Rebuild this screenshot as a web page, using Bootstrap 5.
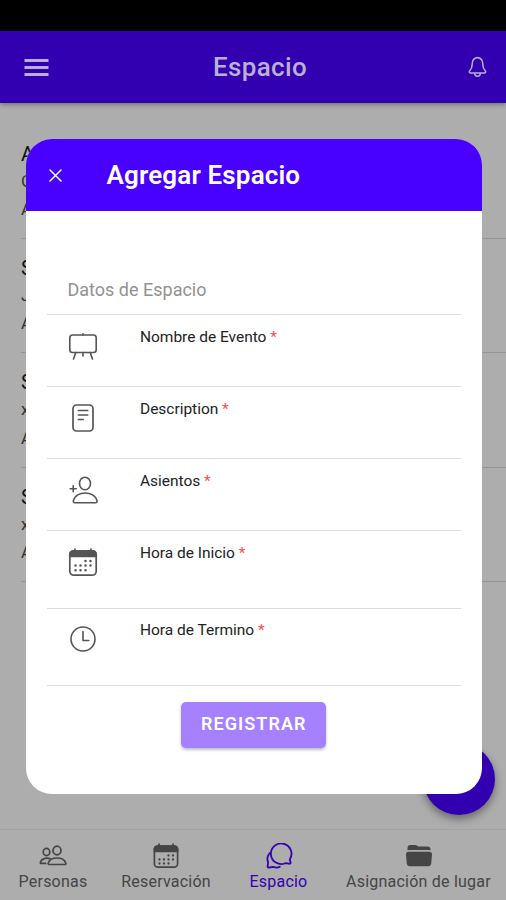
<!DOCTYPE html>
<html lang="es">
<head>
<meta charset="utf-8">
<meta name="viewport" content="width=device-width, initial-scale=1">
<title>Espacio</title>
<link href="https://cdn.jsdelivr.net/npm/bootstrap@5.3.0/dist/css/bootstrap.min.css" rel="stylesheet">
<style>
body{font-family:Roboto,"Liberation Sans",sans-serif;background:#adadad;height:900px;overflow:hidden}
svg{display:block;flex:none;fill:none;stroke:currentColor;stroke-linecap:round;stroke-linejoin:round}
.status{height:31px;background:#000}
.topbar{height:72px;background:#3200b0;color:#bab0d4;padding:0 18px 0 24px;box-shadow:0 2px 4px rgba(0,0,0,.3);z-index:1}
.topbar-title{font-size:26px;font-weight:500;line-height:30px;letter-spacing:.35px;padding-left:4px}
.menu-icon{stroke-linecap:butt}
.spaces{padding:21.5px 0 0 21px}
.space-item{height:114.4px;border-bottom:1px solid #949494;padding-top:16px;color:#333}
.space-item h2{font-size:20px;font-weight:400;line-height:26px;color:#111;margin:0}
.space-item p{font-size:17px;line-height:28.5px;margin:0}
.tabs{height:71px;border-top:1px solid #a2a2a2;background:#adadad;color:#454545}
.tab{padding-top:13px;font-size:16px;line-height:20px;letter-spacing:.22px;white-space:nowrap}
.tab svg{height:26px;margin-bottom:3px}
.tab-a{width:106px}.tab-b{width:120px}.tab-c{width:105px}.tab-d{width:175px}
.tab-current{color:#3400b2}
.fab{width:72px;height:72px;left:422.5px;top:743px;background:#3200b0;box-shadow:0 4px 9px rgba(0,0,0,.4)}
.sheet{left:26px;top:139px;width:455.5px;height:655px;border-radius:26px;background:#fff}
.sheet-head{height:72px;background:#4800ff;color:#fff;padding-left:22px}
.sheet-title{font-size:26px;font-weight:600;margin-left:43.5px;letter-spacing:.15px}
.sheet-body{padding:54px 20.5px 0}
.section-label{height:50px;padding-left:21px;padding-top:13px;font-size:18px;line-height:23px;color:#929292;border-bottom:1px solid #dcdcdc}
.field{height:72.1px;border-bottom:1px solid #dcdcdc;padding-left:20.5px;color:#555}
.field-tall{height:77.4px}
.field svg{margin-top:14.500px}
.field label{margin-left:41px;margin-top:11.500px;font-size:15.5px;line-height:20px;color:#222;letter-spacing:-.02px}
.field label span{color:#ff4a50}
.btn-register{width:145px;height:46px;margin-top:16px;background:#a580ff;color:#fff;border:0;border-radius:5px;font-size:18px;line-height:44px;font-weight:600;letter-spacing:1.05px;padding:0 0 2px;box-shadow:0 2px 3px rgba(0,0,0,.25)}
</style>
<script src="https://cdn.jsdelivr.net/npm/bootstrap@5.3.0/dist/js/bootstrap.bundle.min.js"></script>
</head>
<body class="d-flex flex-column position-relative">
<div class="status flex-shrink-0"></div>
<header class="topbar d-flex align-items-center justify-content-between flex-shrink-0 position-relative">
  <svg class="menu-icon" width="25" height="20" viewBox="0 0 25 20" stroke-width="2.8"><path d="M.5 3.500h24M.5 10.500h24M.5 17.500h24"/></svg>
  <div class="topbar-title">Espacio</div>
  <svg width="21" height="24" viewBox="0 0 21 24" stroke-width="1.5"><path d="M10.500 2.600C7 3.200 5.200 5.800 5.200 9.200c0 4-1 5.200-2.600 6.800-.8 1 0 2 1.100 2h13.600c1.100 0 1.900-1 1.100-2-1.600-1.600-2.600-2.800-2.600-6.800 0-3.400-1.800-6-5.300-6.600zM7.600 18.300c.2 4 5.600 4 5.800 0"/></svg>
</header>
<main class="spaces flex-grow-1">
  <div class="space-item"><h2>A</h2><p>G</p><p>A</p></div>
  <div class="space-item"><h2>S</h2><p>J</p><p>A</p></div>
  <div class="space-item"><h2>S</h2><p>x</p><p>A</p></div>
  <div class="space-item"><h2>S</h2><p>x</p><p>A</p></div>
</main>
<nav class="tabs d-flex flex-shrink-0">
  <div class="tab tab-a d-flex flex-column align-items-center">
    <svg width="28" height="26" viewBox="0 0 28 26" stroke-width="1.7"><ellipse cx="18" cy="7.500" rx="4" ry="4.300"/><path d="M10 21.500c-.8 0-1-.7-.7-1.600C10.500 16.500 14 15 18 15s7.500 1.500 8.700 4.900c.3.900 0 1.600-.7 1.600z"/><ellipse cx="7.500" cy="9" rx="3.300" ry="3.600"/><path d="M11 15.600c-4-1.200-8.500.1-9.600 3.500-.2.700 0 1.300.7 1.300h4.500"/></svg>
    <span>Personas</span></div>
  <div class="tab tab-b d-flex flex-column align-items-center">
    <svg width="26" height="26" viewBox="0 0 26 26" stroke-width="1.700"><rect x="1.400" y="3" width="23.200" height="21.200" rx="3.500"/><path d="M1.400 8.500V6.500Q1.400 3 5 3h16q3.600 0 3.600 3.500v2z" fill="currentColor"/><path d="M6 1v3M20 1v3"/><path stroke-width="2.300" d="M15.500 12.500h0M20 12.500h0M6.500 16.500h0M11 16.500h0M15.500 16.500h0M20 16.500h0M6.500 20.500h0M11 20.500h0M15.500 20.500h0"/></svg>
    <span>Reservación</span></div>
  <div class="tab tab-c tab-current d-flex flex-column align-items-center">
    <svg width="28" height="26" viewBox="0 0 28 26" stroke-width="1.800"><path d="M24.800 16.400A10.300 10.300 0 1 0 20.300 20.200c1.700 0 3.200.7 4.600.5.700-.1.900-.7.700-1.400-.3-1.200-1-1.800-.8-2.900z"/><path d="M4.800 10c-2.600 3-2.900 6-1.800 8.800.3 1.900-.5 3.600-.4 5 .1.500.5.800 1 .7 1.700-.2 3.500-.8 5.300-.4 2.200.7 4.200.5 5.900-.4"/></svg>
    <span>Espacio</span></div>
  <div class="tab tab-d d-flex flex-column align-items-center">
    <svg width="28" height="26" viewBox="0 0 28 26" stroke="none"><path fill="currentColor" stroke="none" d="M2.500 7.300V5Q2.500 2 5.500 2h4.700q1 0 1.800.6l1.300.9H22.500q3 0 3 3v.8Q24.500 7 23 7H5q-1.500 0-2.500.3zM4 8.800h20q3.200 0 3 3L26.200 20.500q-.3 2.800-3 2.800H4.800q-2.700 0-3-2.800L1 11.800q-.2-3 3-3z"/></svg>
    <span>Asignación de lugar</span></div>
</nav>

<div class="fab position-absolute rounded-circle"></div>

<section class="sheet position-absolute overflow-hidden" role="dialog" aria-label="Agregar Espacio">
  <div class="sheet-head d-flex align-items-center">
    <svg width="15" height="15" viewBox="0 0 15 15" stroke-width="1.500"><path d="M2 2l11 11M13 2L2 13"/></svg>
    <div class="sheet-title">Agregar Espacio</div>
  </div>
  <div class="sheet-body d-flex flex-column">
    <div class="section-label">Datos de Espacio</div>
    <div class="field d-flex align-items-start">
      <svg width="32" height="32" viewBox="0 0 32 32" stroke-width="1.600"><rect x="2.800" y="5" width="26.400" height="17.500" rx="2.800"/><path d="M16 5V3.800M16 22.500v3.600M8.800 22.500L6.500 29M23.200 22.500L25.500 29"/></svg>
      <label>Nombre de Evento <span>*</span></label></div>
    <div class="field d-flex align-items-start">
      <svg width="32" height="32" viewBox="0 0 32 32" stroke-width="1.700"><rect x="6" y="3" width="20" height="26" rx="3.500"/><path stroke-width="1.500" d="M11.300 8.500h9.500M11.300 13h9.500M11.300 17.500h5"/></svg>
      <label>Description <span>*</span></label></div>
    <div class="field d-flex align-items-start">
      <svg width="32" height="32" viewBox="0 0 32 32" stroke-width="1.600"><ellipse cx="18" cy="9.500" rx="5.500" ry="6.300"/><path d="M7.800 28.700c-1.200 0-1.700-.8-1.400-2C7.600 21.500 13 19 18.200 19s10.600 2.500 11.800 7.700c.3 1.200-.2 2-1.400 2zM6.200 11.800v6M3.200 14.800h6"/></svg>
      <label>Asientos <span>*</span></label></div>
    <div class="field field-tall d-flex align-items-start">
      <svg width="32" height="32" viewBox="0 0 32 32" stroke-width="1.700"><rect x="2.800" y="4.800" width="26.400" height="24.400" rx="4"/><path d="M2.800 10.500V8.800q0-4 4-4h18.400q4 0 4 4v1.700z" fill="currentColor"/><path d="M8 3v3M24 3v3"/><path stroke-width="2.500" d="M18.500 15h0M23.500 15h0M8.500 19.500h0M13.500 19.500h0M18.500 19.500h0M23.500 19.500h0M8.500 24.200h0M13.500 24.200h0M18.500 24.200h0"/></svg>
      <label>Hora de Inicio <span>*</span></label></div>
    <div class="field field-tall d-flex align-items-start">
      <svg width="32" height="32" viewBox="0 0 32 32" stroke-width="1.600"><circle cx="16" cy="16" r="12"/><path d="M16 8.500v9h5.800"/></svg>
      <label>Hora de Termino <span>*</span></label></div>
    <button type="button" class="btn btn-register align-self-center">REGISTRAR</button>
  </div>
</section>
</body>
</html>
